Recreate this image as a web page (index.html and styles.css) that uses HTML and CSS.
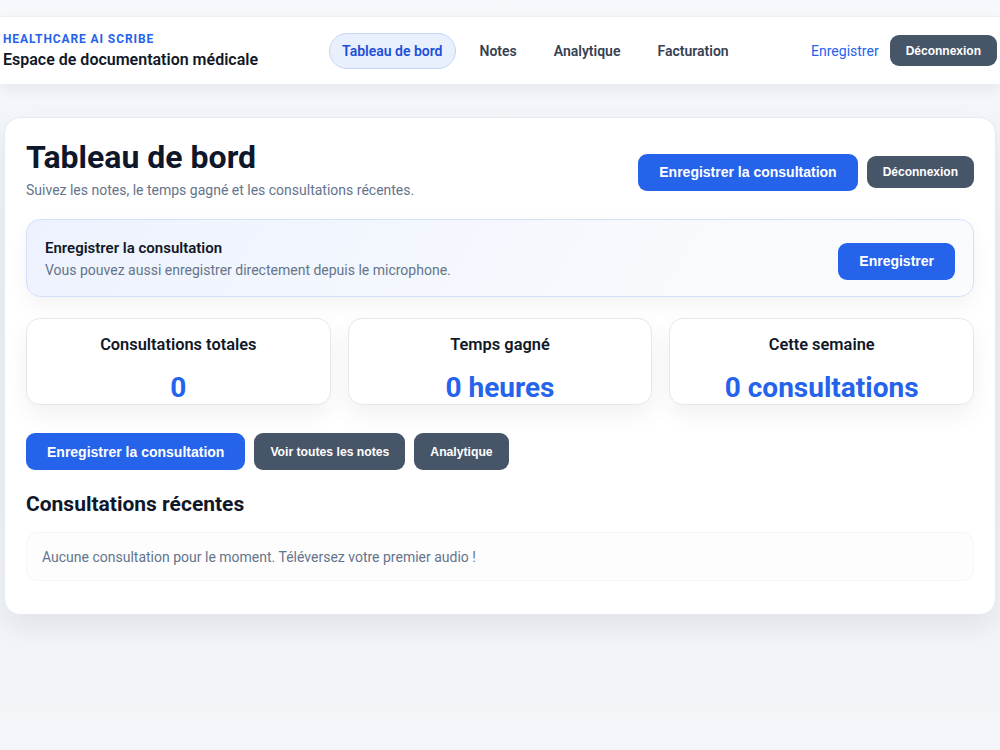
FILE: index.html
```html
<!DOCTYPE html>
<html lang="fr">
<head>
  <meta charset="UTF-8">
  <meta name="viewport" content="width=device-width, initial-scale=1.0">
  <title>Tableau de bord - Healthcare AI Scribe</title>
  <link rel="stylesheet" href="styles.css">
</head>
<body>
  <header class="topbar">
    <div class="brand">
      <div class="brand-tag">HEALTHCARE AI SCRIBE</div>
      <div class="brand-name">Espace de documentation médicale</div>
    </div>
    <nav class="nav">
      <a class="nav-link active" href="#">Tableau de bord</a>
      <a class="nav-link" href="#">Notes</a>
      <a class="nav-link" href="#">Analytique</a>
      <a class="nav-link" href="#">Facturation</a>
    </nav>
    <div class="top-actions">
      <a class="link-record" href="#">Enregistrer</a>
      <button class="btn btn-dark btn-sm">Déconnexion</button>
    </div>
  </header>

  <main class="card">
    <div class="page-head">
      <div>
        <h1>Tableau de bord</h1>
        <p class="muted">Suivez les notes, le temps gagné et les consultations récentes.</p>
      </div>
      <div class="head-actions">
        <button class="btn btn-primary">Enregistrer la consultation</button>
        <button class="btn btn-dark btn-sm">Déconnexion</button>
      </div>
    </div>

    <section class="record-banner">
      <div>
        <h3>Enregistrer la consultation</h3>
        <p class="muted">Vous pouvez aussi enregistrer directement depuis le microphone.</p>
      </div>
      <button class="btn btn-primary">Enregistrer</button>
    </section>

    <section class="stats">
      <div class="stat">
        <div class="stat-label">Consultations totales</div>
        <div class="stat-value">0</div>
      </div>
      <div class="stat">
        <div class="stat-label">Temps gagné</div>
        <div class="stat-value">0 heures</div>
      </div>
      <div class="stat">
        <div class="stat-label">Cette semaine</div>
        <div class="stat-value">0 consultations</div>
      </div>
    </section>

    <div class="quick-actions">
      <button class="btn btn-primary">Enregistrer la consultation</button>
      <button class="btn btn-dark btn-md">Voir toutes les notes</button>
      <button class="btn btn-dark btn-md">Analytique</button>
    </div>

    <h2>Consultations récentes</h2>
    <div class="empty">Aucune consultation pour le moment. Téléversez votre premier audio !</div>
  </main>
</body>
</html>
```

FILE: styles.css
```css
* {
  box-sizing: border-box;
}
body {
  margin: 0;
  padding: 16px 0 40px;
  font-family: Roboto, "Noto Sans", sans-serif;
  color: #0f172a;
  background: linear-gradient(180deg, #f6f8fc 0%, #eef2f6 40%, #f3f5f9 100%);
  min-height: 750px;
}
.topbar {
  display: flex;
  align-items: center;
  height: 68px;
  padding: 0 3px 0 3px;
  background: #fff;
  border-top: 1px solid #edf0f5;
  box-shadow: 0 6px 14px rgba(15, 23, 42, 0.06);
}
.brand-tag {
  font-size: 12px;
  font-weight: 700;
  letter-spacing: 0.9px;
  color: #2563eb;
  line-height: 14px;
}
.brand-name {
  font-size: 16px;
  font-weight: 600;
  color: #111827;
  margin-top: 4px;
}
.nav {
  display: flex;
  align-items: center;
  gap: 11px;
  margin-left: 71px;
}
.nav-link {
  display: block;
  padding: 0 12px;
  height: 36px;
  line-height: 34px;
  border: 1px solid transparent;
  border-radius: 18px;
  font-size: 14px;
  font-weight: 600;
  color: #374151;
  text-decoration: none;
}
.nav-link.active {
  background: #e8effd;
  border-color: #c3d5fb;
  color: #1d4ed8;
}
.top-actions {
  margin-left: auto;
  display: flex;
  align-items: center;
  gap: 11px;
}
.link-record {
  font-size: 14px;
  color: #2563eb;
  text-decoration: none;
}
.btn {
  border: none;
  border-radius: 9px;
  font-family: "Liberation Sans", Arial, sans-serif;
  font-weight: 700;
  color: #fff;
  cursor: pointer;
}
.btn-primary {
  background: #2563eb;
  height: 37px;
  padding: 0 21px;
  font-size: 14px;
}
.btn-dark {
  background: #475569;
}
.btn-sm {
  height: 32px;
  padding: 0 16px;
  font-size: 12px;
}
.btn-md {
  height: 37px;
  padding: 0 16px;
  font-size: 12.2px;
}
.topbar .btn-sm {
  height: 31px;
}
.card {
  margin: 33px 4px 0 4px;
  padding: 21px 21px 33px;
  background: #fff;
  border: 1px solid #e6eaf0;
  border-radius: 16px;
  box-shadow: 0 12px 30px rgba(15, 23, 42, 0.08);
}
.page-head {
  display: flex;
  justify-content: space-between;
  align-items: center;
  padding-top: 1px;
}
h1 {
  margin: 0;
  font-size: 32px;
  font-weight: 700;
  line-height: 34px;
  color: #0f172a;
}
.muted {
  margin: 0;
  font-size: 14px;
  color: #64748b;
}
.page-head .muted {
  margin-top: 8px;
}
.head-actions {
  display: flex;
  align-items: center;
  gap: 9px;
  margin-top: 6px;
}
.record-banner {
  display: flex;
  align-items: center;
  justify-content: space-between;
  margin-top: 21px;
  height: 78px;
  padding: 0 18px;
  border: 1px solid #d4e0fa;
  border-radius: 14px;
  background: linear-gradient(120deg, #edf2fe 0%, #f8fafd 70%, #fafbfd 100%);
  box-shadow: 0 8px 20px rgba(15, 23, 42, 0.05);
}
.record-banner .btn {
  margin-top: 6px;
}
h3 {
  margin: 0 0 5px;
  font-size: 15px;
  font-weight: 600;
  color: #111827;
}
.stats {
  display: grid;
  grid-template-columns: repeat(3, 1fr);
  gap: 17px;
  margin-top: 21px;
}
.stat {
  height: 87px;
  padding-top: 16px;
  text-align: center;
  background: #fff;
  border: 1px solid #e4e8ef;
  border-radius: 14px;
  box-shadow: 0 10px 24px rgba(15, 23, 42, 0.06);
}
.stat-label {
  font-size: 16.4px;
  font-weight: 600;
  color: #111827;
}
.stat-value {
  margin-top: 19px;
  font-size: 28px;
  line-height: 30px;
  font-weight: 700;
  color: #2563eb;
}
.quick-actions {
  display: flex;
  gap: 9px;
  margin-top: 28px;
}
h2 {
  margin: 22px 0 0;
  font-size: 21px;
  font-weight: 700;
  color: #0f172a;
}
.empty {
  margin-top: 16px;
  padding: 16px 15px 15px;
  font-size: 14px;
  color: #64748b;
  background: #fdfdfe;
  border: 1px solid #f4f6f9;
  border-radius: 12px;
}
```
